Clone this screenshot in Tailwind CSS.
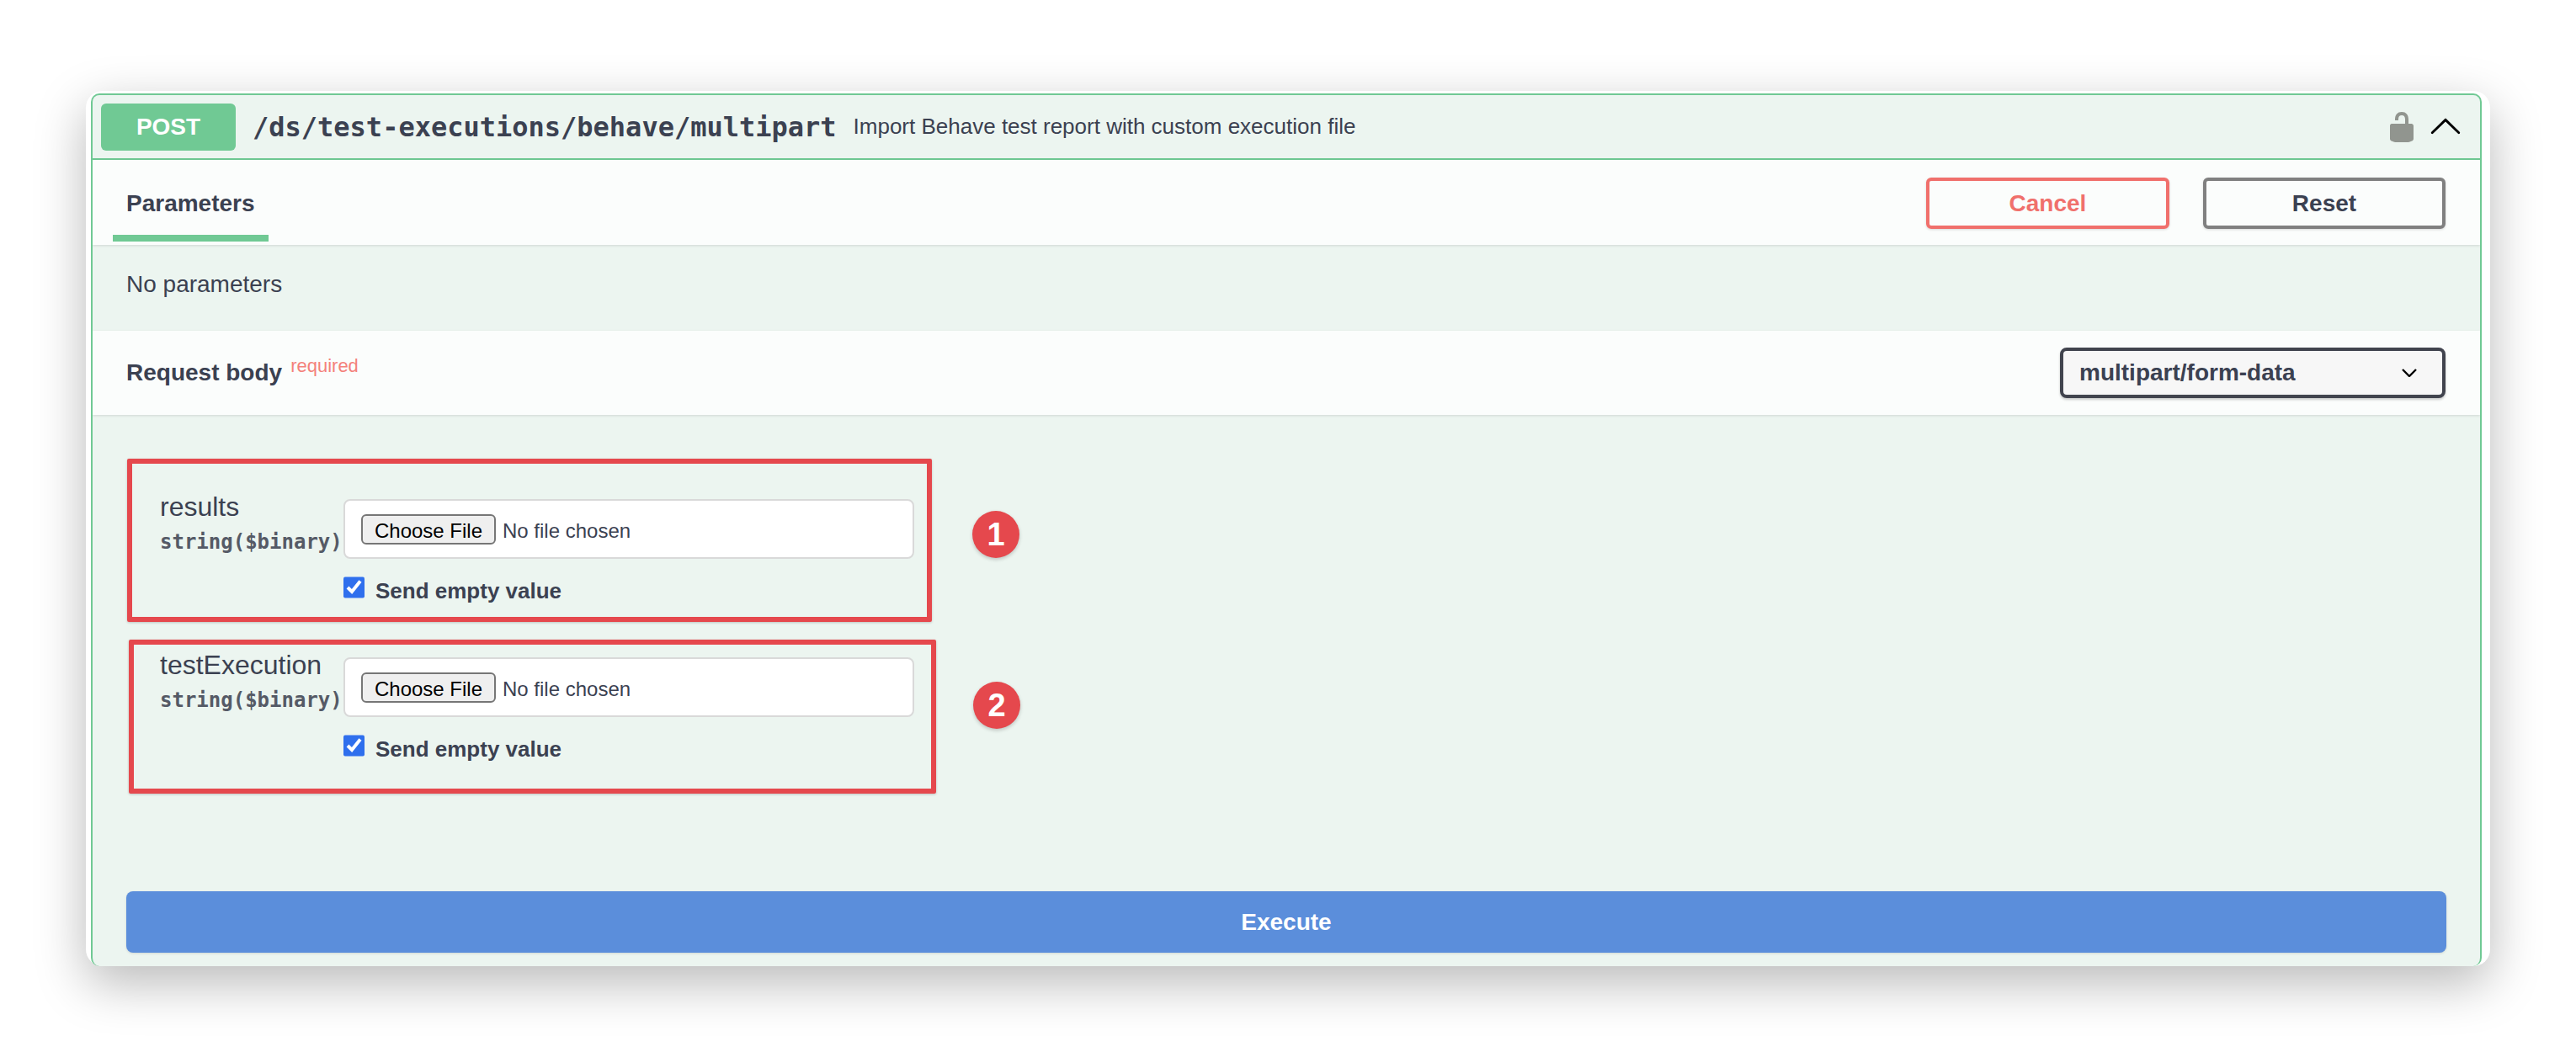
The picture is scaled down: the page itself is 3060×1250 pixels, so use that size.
<!DOCTYPE html>
<html lang="en">
<head>
    <meta charset="UTF-8">
    <title>Swagger - POST multipart</title>
    <script src="https://cdn.jsdelivr.net/npm/@tailwindcss/browser@4"></script>
</head>
<body class="bg-white h-[1250px] overflow-hidden font-['Liberation_Sans',Arial,sans-serif] text-[#3b4151]">

    <!-- Card -->
    <div class="relative ml-[102px] mt-[108px] w-[2856px] h-[1040px] pt-[3px] pl-[6px] pr-[10px] bg-white rounded-[20px] shadow-[0_20px_60px_rgba(0,0,0,0.28)]">
        <div class="h-full bg-[#ecf5f0] border-x-2 border-t-2 border-[#70c994] rounded-t-[10px] rounded-b-[10px] overflow-hidden">

            <!-- Summary -->
            <div class="h-[77px] border-b-2 border-[#70c994] flex items-center pl-[10px] pr-[21px]">
                <span class="w-[160px] h-[56px] bg-[#70c994] rounded-[6px] flex items-center justify-center text-white text-[28px] font-bold">POST</span>
                <span class="ml-[20px] font-['DejaVu_Sans_Mono',monospace] font-bold text-[32px]">/ds/test-executions/behave/multipart</span>
                <span class="ml-[20px] text-[26px]">Import Behave test report with custom execution file</span>
                <svg class="ml-auto w-[40px] h-[40px] fill-[#91958f]" viewBox="0 0 20 20">
                    <path d="M15.8 8H14V5.6C14 2.703 12.665 1 10 1 7.334 1 6 2.703 6 5.6V6h2v-.801C8 3.754 8.797 3 10 3c1.203 0 2 .754 2 2.199V8H4c-.553 0-1 .646-1 1.199V17c0 .549.428 1.139.951 1.307l1.197.387C5.672 18.861 6.55 19 7.1 19h5.8c.549 0 1.428-.139 1.951-.307l1.196-.387c.524-.167.953-.757.953-1.306V9.199C17 8.646 16.352 8 15.8 8z"/>
                </svg>
                <svg class="ml-[12px] w-[40px] h-[40px] rotate-180" viewBox="0 0 20 20">
                    <path d="M17.418 6.109c.272-.268.709-.268.979 0s.271.701 0 .969l-7.908 7.83c-.27.268-.707.268-.979 0l-7.908-7.83c-.27-.268-.27-.701 0-.969.271-.268.709-.268.979 0L10 13.25l7.418-7.141z"/>
                </svg>
            </div>

            <!-- Parameters header -->
            <div class="h-[101px] bg-[#fbfdfc] shadow-[0_1px_3px_rgba(0,0,0,0.12)] relative flex justify-between pl-[24px] pr-[41px]">
                <div class="h-[97px] pt-[14px] px-[16px] border-b-[8px] border-[#70c994] flex items-center text-[28px] font-bold">Parameters</div>
                <div class="flex gap-[40px] pt-[21px]">
                    <button class="w-[289px] h-[61px] border-[4px] border-[#f0706c] rounded-[6px] text-[#f0706c] text-[28px] font-bold shadow-[0_1px_3px_rgba(0,0,0,0.15)]">Cancel</button>
                    <button class="w-[288px] h-[61px] border-[4px] border-[#808080] rounded-[6px] text-[28px] font-bold shadow-[0_1px_3px_rgba(0,0,0,0.15)]">Reset</button>
                </div>
            </div>

            <p class="h-[102px] px-[40px] pt-[30px] text-[28px] leading-[34px]">No parameters</p>

            <!-- Request body header -->
            <div class="h-[100px] bg-[#fbfdfc] shadow-[0_1px_3px_rgba(0,0,0,0.12)] relative flex items-center justify-between pl-[40px] pr-[41px]">
                <div class="flex items-start">
                    <span class="text-[28px] font-bold">Request body</span>
                    <span class="ml-[10px] -mt-[4px] text-[22px] text-[#f4817b]">required</span>
                </div>
                <div class="relative">
                    <select class="w-[458px] h-[60px] appearance-none pl-[19px] bg-[#f7f7f7] border-[4px] border-[#41444e] rounded-[8px] text-[28px] font-bold shadow-[0_2px_3px_rgba(0,0,0,0.2)]">
                        <option>multipart/form-data</option>
                    </select>
                    <svg class="absolute right-[34px] top-[25px] w-[18px] h-[10px]" viewBox="0 0 18 10" fill="none" stroke="#000" stroke-width="2.4">
                        <path d="M1 1l8 8 8-8"/>
                    </svg>
                </div>
            </div>

            <!-- Form rows -->
            <div class="pt-[100px] pl-[80px]">
                <div class="h-[188px] flex">
                    <div class="w-[218px] -mt-[11px]">
                        <div class="text-[32px] leading-[40px]">results</div>
                        <div class="font-['DejaVu_Sans_Mono',monospace] font-bold text-[24px] leading-[44px] text-[#555a66]">string($binary)</div>
                    </div>
                    <div>
                        <input type="file" class="block w-[678px] h-[71px] pl-[19px] py-[16px] bg-white border-2 border-[#d9d9d9] rounded-[8px] text-[24px] file:w-[160px] file:h-[36px] file:pb-[2px] file:mr-[8px] file:bg-[#efefef] file:border-2 file:border-[#767676] file:rounded-[6px] file:text-black">
                        <label class="mt-[17px] flex items-center gap-[13px] text-[26px] leading-[42px] font-bold">
                            <input type="checkbox" checked class="w-[25px] h-[26px] -mt-[8px] accent-[#2f6fed]">Send empty value
                        </label>
                    </div>
                </div>
                <div class="h-[188px] flex">
                    <div class="w-[218px] -mt-[11px]">
                        <div class="text-[32px] leading-[40px]">testExecution</div>
                        <div class="font-['DejaVu_Sans_Mono',monospace] font-bold text-[24px] leading-[44px] text-[#555a66]">string($binary)</div>
                    </div>
                    <div>
                        <input type="file" class="block w-[678px] h-[71px] pl-[19px] py-[16px] bg-white border-2 border-[#d9d9d9] rounded-[8px] text-[24px] file:w-[160px] file:h-[36px] file:pb-[2px] file:mr-[8px] file:bg-[#efefef] file:border-2 file:border-[#767676] file:rounded-[6px] file:text-black">
                        <label class="mt-[17px] flex items-center gap-[13px] text-[26px] leading-[42px] font-bold">
                            <input type="checkbox" checked class="w-[25px] h-[26px] -mt-[8px] accent-[#2f6fed]">Send empty value
                        </label>
                    </div>
                </div>
            </div>

            <div class="mt-[90px] px-[40px]">
                <button class="w-[2756px] h-[73px] bg-[#5b8edb] rounded-[8px] text-white text-[28px] font-bold shadow-[0_1px_3px_rgba(0,0,0,0.12)]">Execute</button>
            </div>
        </div>

        <!-- Annotations over the screenshot -->
        <div class="absolute left-[49px] top-[437px] w-[956px] h-[194px] border-[6px] border-[#e5484d] rounded-[2px] shadow-[0_1px_3px_rgba(0,0,0,0.2)]"></div>
        <div class="absolute left-[51px] top-[652px] w-[959px] h-[183px] border-[6px] border-[#e5484d] rounded-[2px] shadow-[0_1px_3px_rgba(0,0,0,0.2)]"></div>
        <div class="absolute left-[1053px] top-[499px] w-[56px] h-[56px] rounded-full bg-[#e5484d] text-white text-[38px] font-bold flex items-center justify-center shadow-[0_2px_4px_rgba(0,0,0,0.2)]">1</div>
        <div class="absolute left-[1054px] top-[702px] w-[56px] h-[56px] rounded-full bg-[#e5484d] text-white text-[38px] font-bold flex items-center justify-center shadow-[0_2px_4px_rgba(0,0,0,0.2)]">2</div>
    </div>

</body>
</html>
